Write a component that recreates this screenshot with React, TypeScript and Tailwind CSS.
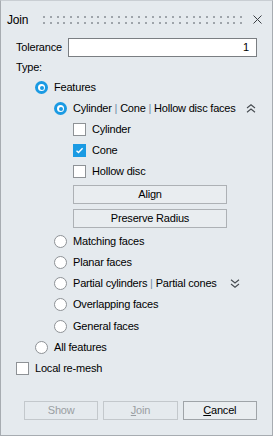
import React from "react";

const Radio = ({ checked }: { checked?: boolean }) =>
  checked ? (
    <span className="flex h-[13px] w-[13px] shrink-0 items-center justify-center rounded-full bg-[#1a9ae3]">
      <span className="flex h-[7px] w-[7px] items-center justify-center rounded-full bg-white">
        <span className="h-[4px] w-[4px] rounded-full bg-[#1a9ae3]" />
      </span>
    </span>
  ) : (
    <span className="h-[13px] w-[13px] shrink-0 rounded-full border border-[#8e9296] bg-white" />
  );

const Check = ({ checked }: { checked?: boolean }) =>
  checked ? (
    <span className="flex h-[13px] w-[13px] shrink-0 items-center justify-center bg-[#1a9ae3]">
      <svg width="9" height="9" viewBox="0 0 9 9">
        <path d="M1.5 4.8 L3.5 6.6 L7.6 2.2" fill="none" stroke="white" strokeWidth="1.4" />
      </svg>
    </span>
  ) : (
    <span className="h-[13px] w-[13px] shrink-0 border border-[#8e9296] bg-white" />
  );

const Chevrons = ({ up }: { up?: boolean }) => (
  <svg width="10" height="9" viewBox="0 0 10 9">
    {up ? (
      <path d="M1 4 L5 0.8 L9 4 M1 8.2 L5 5 L9 8.2" fill="none" stroke="#464b50" strokeWidth="1.1" />
    ) : (
      <path d="M1 0.8 L5 4 L9 0.8 M1 5 L5 8.2 L9 5" fill="none" stroke="#464b50" strokeWidth="1.1" />
    )}
  </svg>
);

const Pipe = () => <span className="text-[#6f8aa6]"> | </span>;

const Row = ({ indent, children }: { indent: string; children: React.ReactNode }) => (
  <div className={`flex h-[21px] items-center ${indent}`}>{children}</div>
);

const dots = Array.from({ length: 30 }, (_, i) => Math.round(i * 6.8));

export default function App() {
  return (
    <div
      className="flex h-[436px] w-[273px] flex-col border border-t-[#c9ced3] border-x-[#a7acb1] border-b-[#a7acb1] bg-[#e5eaee] text-[11px] tracking-[-0.2px] text-black"
      style={{ fontFamily: '"Liberation Sans", Arial, sans-serif' }}
    >
      {/* title bar */}
      <div className="flex h-[37px] items-center pl-[6px] pr-[10px]">
        <span className="text-[12px]">Join</span>
        <svg className="ml-[15px]" width="200" height="8" viewBox="0 0 200 8">
          {dots.map((x) => (
            <g key={x} fill="#9ea4aa">
              <rect x={x} y="0" width="2" height="2" />
              <rect x={x} y="6" width="2" height="2" />
            </g>
          ))}
        </svg>
        <svg className="ml-auto" width="9" height="9" viewBox="0 0 9 9">
          <path d="M0.5 0.5 L8.5 8.5 M8.5 0.5 L0.5 8.5" stroke="#3a3f44" strokeWidth="1" />
        </svg>
      </div>

      <div className="flex flex-col pl-[15px] pr-[15px]">
        <div className="flex h-[19px] items-center">
          <span className="w-[52px]">Tolerance</span>
          <div className="flex h-[19px] flex-1 items-center justify-end border border-[#7a7e82] bg-white pr-[7px]">
            1
          </div>
        </div>
        <div className="flex h-[20px] items-center">Type:</div>

        <Row indent="pl-[19px]">
          <Radio checked />
          <span className="ml-[6px]">Features</span>
        </Row>
        <Row indent="pl-[38px]">
          <Radio checked />
          <span className="ml-[6px]">
            Cylinder<Pipe />Cone<Pipe />Hollow disc faces
          </span>
          <span className="ml-auto mr-[1px]">
            <Chevrons up />
          </span>
        </Row>
        <Row indent="pl-[57px]">
          <Check />
          <span className="ml-[6px]">Cylinder</span>
        </Row>
        <Row indent="pl-[57px]">
          <Check checked />
          <span className="ml-[6px]">Cone</span>
        </Row>
        <Row indent="pl-[57px]">
          <Check />
          <span className="ml-[6px]">Hollow disc</span>
        </Row>
        <div className="flex flex-col gap-[5px] pl-[57px] pr-[30px] pt-[3px]">
          <button className="h-[19px] border border-[#adb1b5] bg-[#e9edf0]">Align</button>
          <button className="h-[19px] border border-[#adb1b5] bg-[#e9edf0]">Preserve Radius</button>
        </div>
        <div className="h-[3px]" />
        <Row indent="pl-[38px]">
          <Radio />
          <span className="ml-[6px]">Matching faces</span>
        </Row>
        <Row indent="pl-[38px]">
          <Radio />
          <span className="ml-[6px]">Planar faces</span>
        </Row>
        <Row indent="pl-[38px]">
          <Radio />
          <span className="ml-[6px]">
            Partial cylinders<Pipe />Partial cones
          </span>
          <span className="ml-[13px]">
            <Chevrons />
          </span>
        </Row>
        <Row indent="pl-[38px]">
          <Radio />
          <span className="ml-[6px]">Overlapping faces</span>
        </Row>
        <div className="h-[1px]" />
        <Row indent="pl-[38px]">
          <Radio />
          <span className="ml-[6px]">General faces</span>
        </Row>
        <Row indent="pl-[19px]">
          <Radio />
          <span className="ml-[6px]">All features</span>
        </Row>
        <Row indent="pl-0">
          <Check />
          <span className="ml-[6px]">Local re-mesh</span>
        </Row>
      </div>

      <div className="mt-auto flex gap-[5px] pb-[15px] pl-[23px] pr-[15px]">
        <button className="h-[19px] w-[75px] border border-[#c3c8cc] text-[#9a9ea2]">Show</button>
        <button className="h-[19px] w-[75px] border border-[#c3c8cc] text-[#9a9ea2]">
          <span className="underline">J</span>oin
        </button>
        <button className="h-[19px] w-[75px] border border-[#9fa4a8] bg-[#e9edf0]">
          <span className="underline">C</span>ancel
        </button>
      </div>
    </div>
  );
}
